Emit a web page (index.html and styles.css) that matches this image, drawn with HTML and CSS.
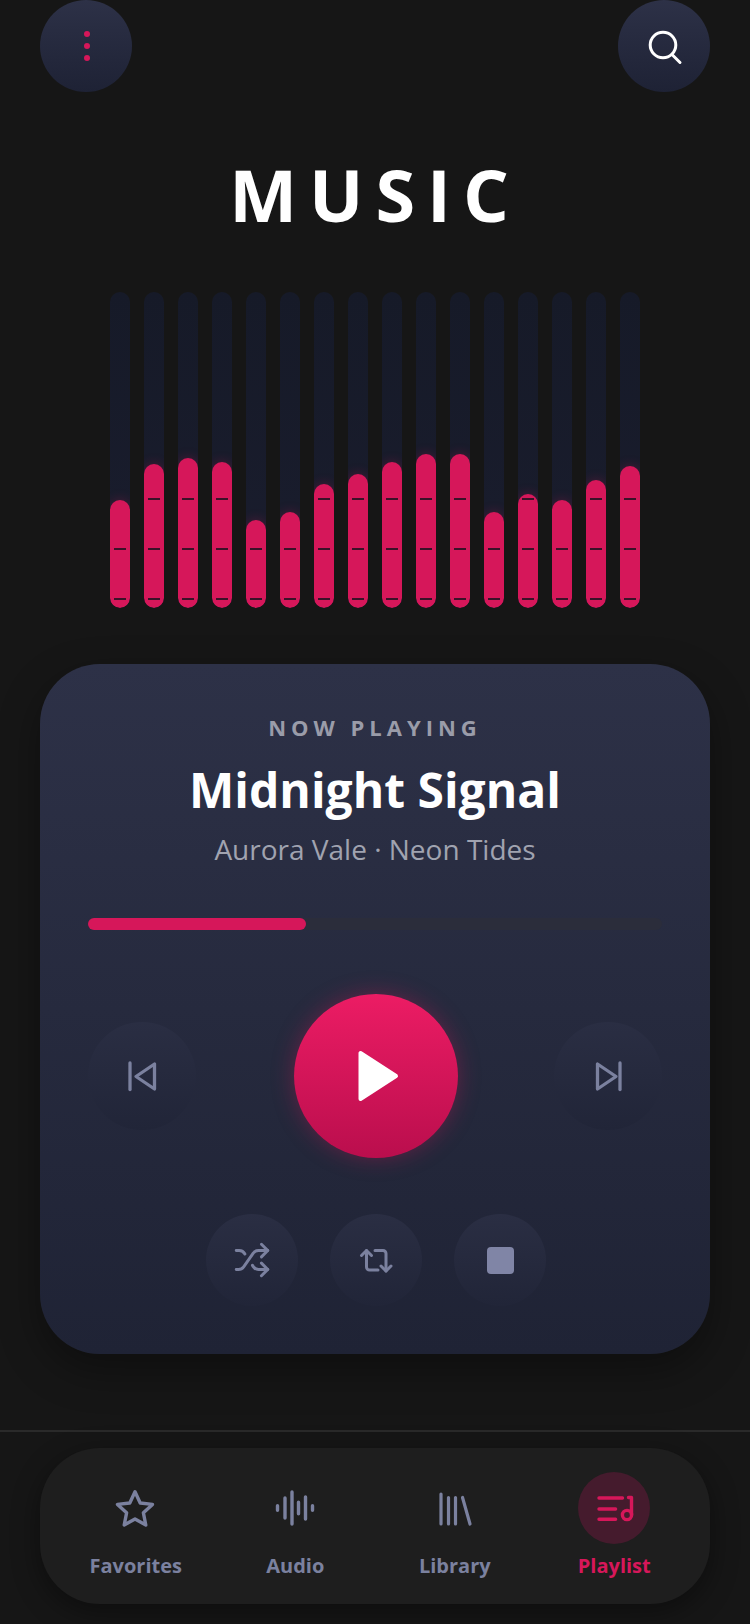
FILE: index.html
```html
<!DOCTYPE html>
<html lang="en">
<head>
    <meta charset="UTF-8">
    <meta name="viewport" content="width=device-width, initial-scale=1.0">
    <title>Music</title>
    <link rel="stylesheet" href="styles.css">
</head>
<body>
    <header class="top-bar">
        <button class="round-btn" type="button" aria-label="Menu">
            <span class="menu-dots"><i></i><i></i><i></i></span>
        </button>
        <button class="round-btn" type="button" aria-label="Search">
            <svg class="icon-40" viewBox="0 0 40 40" fill="none" stroke="#fff" stroke-width="3" stroke-linecap="round">
                <circle cx="19" cy="19" r="12.8"/>
                <path d="M28.5 29l7.5 7.5"/>
            </svg>
        </button>
    </header>

    <h1 class="page-title">MUSIC</h1>

    <div class="equalizer">
        <div class="eq-track"><div class="eq-fill" style="height:108px"><i></i><i></i><i></i></div></div>
        <div class="eq-track"><div class="eq-fill" style="height:144px"><i></i><i></i><i></i></div></div>
        <div class="eq-track"><div class="eq-fill" style="height:150px"><i></i><i></i><i></i></div></div>
        <div class="eq-track"><div class="eq-fill" style="height:146px"><i></i><i></i><i></i></div></div>
        <div class="eq-track"><div class="eq-fill" style="height:88px"><i></i><i></i><i></i></div></div>
        <div class="eq-track"><div class="eq-fill" style="height:96px"><i></i><i></i><i></i></div></div>
        <div class="eq-track"><div class="eq-fill" style="height:124px"><i></i><i></i><i></i></div></div>
        <div class="eq-track"><div class="eq-fill" style="height:134px"><i></i><i></i><i></i></div></div>
        <div class="eq-track"><div class="eq-fill" style="height:146px"><i></i><i></i><i></i></div></div>
        <div class="eq-track"><div class="eq-fill" style="height:154px"><i></i><i></i><i></i></div></div>
        <div class="eq-track"><div class="eq-fill" style="height:154px"><i></i><i></i><i></i></div></div>
        <div class="eq-track"><div class="eq-fill" style="height:96px"><i></i><i></i><i></i></div></div>
        <div class="eq-track"><div class="eq-fill" style="height:114px"><i></i><i></i><i></i></div></div>
        <div class="eq-track"><div class="eq-fill" style="height:108px"><i></i><i></i><i></i></div></div>
        <div class="eq-track"><div class="eq-fill" style="height:128px"><i></i><i></i><i></i></div></div>
        <div class="eq-track"><div class="eq-fill" style="height:142px"><i></i><i></i><i></i></div></div>
    </div>

    <main class="player-card">
        <p class="now-label">NOW PLAYING</p>
        <h2 class="song-title">Midnight Signal</h2>
        <p class="song-artist">Aurora Vale · Neon Tides</p>

        <div class="progress"><div class="progress-fill" style="width:38%"></div></div>

        <div class="controls">
            <button class="ctrl-btn" type="button" aria-label="Previous">
                <svg class="icon-40" viewBox="0 0 40 40" fill="none" stroke="#7b819f" stroke-width="3.3" stroke-linecap="round" stroke-linejoin="round">
                    <path d="M8 7v26.5"/>
                    <path d="M32.5 8v25L14 20.5z"/>
                </svg>
            </button>
            <button class="play-btn" type="button" aria-label="Play">
                <svg class="icon-60" viewBox="0 0 60 60" fill="#fff" stroke="#fff" stroke-width="4" stroke-linejoin="round">
                    <path d="M14.5 7v46l35.5-23z"/>
                </svg>
            </button>
            <button class="ctrl-btn" type="button" aria-label="Next">
                <svg class="icon-40" viewBox="0 0 40 40" fill="none" stroke="#7b819f" stroke-width="3.3" stroke-linecap="round" stroke-linejoin="round">
                    <path d="M9.5 8v25L28 20.5z"/>
                    <path d="M32 7v26.5"/>
                </svg>
            </button>
        </div>

        <div class="sub-controls">
            <button class="sub-btn" type="button" aria-label="Shuffle">
                <svg class="icon-40" viewBox="-.7 -.7 25.4 25.4" fill="none" stroke="#7b819f" stroke-width="1.9" stroke-linecap="round" stroke-linejoin="round">
                    <path d="M2 18h1.4c1.3 0 2.5-.6 3.3-1.7l6.1-8.6c.7-1.1 2-1.7 3.3-1.7H22"/>
                    <path d="M18 2l4 4-4 4"/>
                    <path d="M2 6h1.9c1.5 0 2.9.9 3.6 2.2"/>
                    <path d="M22 18h-5.9c-1.3 0-2.6-.7-3.3-1.8l-.5-.8"/>
                    <path d="M18 14l4 4-4 4"/>
                </svg>
            </button>
            <button class="sub-btn" type="button" aria-label="Repeat">
                <svg class="icon-40" viewBox="0 0 40 40" fill="none" stroke="#7b819f" stroke-width="3" stroke-linecap="round" stroke-linejoin="round">
                    <path d="M5.5 15.5l5-5 5 5"/>
                    <path d="M10.5 10.5V27a3 3 0 0 0 3 3H22"/>
                    <path d="M19 10.5h8a3 3 0 0 1 3 3V31"/>
                    <path d="M25 26l5 5 5-5"/>
                </svg>
            </button>
            <button class="sub-btn" type="button" aria-label="Stop">
                <span class="stop-square"></span>
            </button>
        </div>
    </main>

    <footer class="bottom-area">
        <nav class="bottom-nav">
            <a class="nav-item" href="#">
                <span class="nav-icon">
                    <svg class="icon-40 star-icon" viewBox="0 0 40 40" fill="none" stroke="#7b819f" stroke-width="3.4" stroke-linejoin="round">
                        <path d="M20 3.7l5.2 11.3 12.3 1.4-9.1 8.4 2.4 12.2L20 30.9 9.2 37l2.4-12.2-9.1-8.4L14.8 15z"/>
                    </svg>
                </span>
                <span class="nav-label">Favorites</span>
            </a>
            <a class="nav-item" href="#">
                <span class="nav-icon">
                    <svg class="icon-40" viewBox="0 0 40 40" fill="none" stroke="#7b819f" stroke-width="3.4" stroke-linecap="round">
                        <path d="M2.5 17.7v4.6M10 10v20M17 4v32M23.5 14.3v11.4M30.5 9v22M37.5 17.7v4.6"/>
                    </svg>
                </span>
                <span class="nav-label">Audio</span>
            </a>
            <a class="nav-item" href="#">
                <span class="nav-icon">
                    <svg class="icon-40" viewBox="0 0 40 40" fill="none" stroke="#7b819f" stroke-width="3.2" stroke-linecap="round">
                        <path d="M6 6v30M13.5 9.5V36M20.5 9.5V36M27.5 9.5L35 36"/>
                    </svg>
                </span>
                <span class="nav-label">Library</span>
            </a>
            <a class="nav-item nav-item-active" href="#">
                <span class="nav-icon">
                    <svg class="icon-40" viewBox="0 0 40 40" fill="none" stroke="#d6175a" stroke-width="3.4" stroke-linecap="round" stroke-linejoin="round">
                        <path d="M5 10h23.5M5 21h16.6M5 31.3h16.6"/>
                        <circle cx="33" cy="27" r="4.6"/>
                        <path d="M37.5 27V9.5h-3"/>
                    </svg>
                </span>
                <span class="nav-label">Playlist</span>
            </a>
        </nav>
    </footer>
</body>
</html>
```

FILE: styles.css
```css
* {
    box-sizing: border-box;
}

body {
    font-family: 'Open Sans', sans-serif;
    background-color: #161616;
    color: #ffffff;
    margin: 0;
    padding: 0;
    width: 750px;
    height: 1624px;
    overflow: hidden;
}

button {
    border: none;
    padding: 0;
    cursor: pointer;
    display: flex;
    align-items: center;
    justify-content: center;
}

.icon-40 {
    width: 40px;
    height: 40px;
    display: block;
}

.icon-60 {
    width: 60px;
    height: 60px;
    display: block;
}

/* top */
.top-bar {
    display: flex;
    justify-content: space-between;
    padding: 0 40px;
}

.round-btn {
    width: 92px;
    height: 92px;
    border-radius: 50%;
    background: linear-gradient(180deg, #2d3147, #1e2235);
}

.menu-dots {
    display: flex;
    flex-direction: column;
    gap: 6px;
    margin-left: 2px;
}

.menu-dots i {
    display: block;
    width: 6px;
    height: 6px;
    border-radius: 50%;
    background-color: #d6175a;
}

.page-title {
    margin: 66px 0 0;
    font-size: 72px;
    line-height: 72px;
    font-weight: 700;
    letter-spacing: 12px;
    text-align: center;
}

/* equalizer */
.equalizer {
    display: flex;
    justify-content: center;
    gap: 14px;
    margin-top: 62px;
}

.eq-track {
    width: 20px;
    height: 316px;
    border-radius: 10px;
    background: linear-gradient(180deg, #161a28, #1a1d2e);
    display: flex;
    align-items: flex-end;
    overflow: hidden;
}

.eq-fill {
    width: 20px;
    border-radius: 10px;
    background-color: #d6175a;
    box-shadow: 0 0 12px rgba(214, 23, 90, 0.3);
    display: flex;
    flex-direction: column-reverse;
    align-items: center;
    gap: 48px;
    padding-bottom: 8px;
    overflow: hidden;
    flex-shrink: 0;
}

.eq-fill i {
    display: block;
    width: 12px;
    height: 2px;
    flex-shrink: 0;
    background-color: #3a1228;
}

/* player */
.player-card {
    margin: 56px 40px 0;
    height: 690px;
    padding: 48px 48px 48px;
    border-radius: 60px;
    background: linear-gradient(180deg, #2d3147, #1f2335);
    box-shadow: 0 16px 40px rgba(0, 0, 0, 0.35);
    text-align: center;
}

.now-label {
    margin: 0;
    font-size: 22px;
    line-height: 30px;
    font-weight: 700;
    letter-spacing: 5px;
    color: #9a9ca9;
}

.song-title {
    margin: 19px 0 0;
    font-size: 48px;
    line-height: 57px;
    font-weight: 700;
}

.song-artist {
    margin: 12px 0 0;
    font-size: 28px;
    line-height: 38px;
    color: #a0a3b0;
}

.progress {
    margin-top: 50px;
    height: 12px;
    border-radius: 6px;
    background-color: #2b2d3b;
}

.progress-fill {
    height: 12px;
    border-radius: 6px;
    background-color: #d6175a;
}

.controls {
    display: flex;
    justify-content: space-between;
    align-items: center;
    margin-top: 64px;
}

.ctrl-btn {
    width: 108px;
    height: 108px;
    border-radius: 50%;
    background: linear-gradient(180deg, #2a2e43, #212538);
}

.play-btn {
    width: 164px;
    height: 164px;
    margin-left: 2px;
    border-radius: 50%;
    background: linear-gradient(180deg, #ec1c64, #ba0e4d);
    box-shadow: 0 0 22px rgba(214, 23, 90, 0.35);
}

.sub-controls {
    display: flex;
    justify-content: center;
    gap: 32px;
    margin-top: 56px;
    padding-left: 2px;
}

.sub-btn {
    width: 92px;
    height: 92px;
    border-radius: 50%;
    background: linear-gradient(180deg, #2a2e43, #212538);
}

.stop-square {
    display: block;
    width: 27px;
    height: 27px;
    border-radius: 4px;
    background-color: #8085a6;
}

/* bottom nav */
.bottom-area {
    margin-top: 76px;
    border-top: 2px solid #2a2a2a;
    padding: 16px 40px 20px;
}

.bottom-nav {
    display: grid;
    grid-template-columns: repeat(4, 1fr);
    height: 156px;
    padding: 24px 16px 0;
    border-radius: 60px;
    background-color: #1e1e1e;
    box-shadow: 0 8px 28px rgba(0, 0, 0, 0.4);
}

.nav-item {
    display: flex;
    flex-direction: column;
    align-items: center;
    text-decoration: none;
    color: #7b819f;
}

.nav-icon {
    width: 72px;
    height: 72px;
    border-radius: 50%;
    display: flex;
    align-items: center;
    justify-content: center;
}

.star-icon {
    margin-left: -2px;
}

.nav-label {
    margin-top: 8px;
    font-size: 20px;
    line-height: 28px;
    font-weight: 700;
}

.nav-item-active {
    color: #d6175a;
}

.nav-item-active .nav-icon {
    background-color: #451b2d;
}
```
